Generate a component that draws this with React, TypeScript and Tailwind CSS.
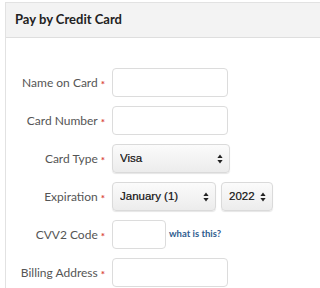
import React from 'react';

const LABEL = 'font-["Lato","Noto_Sans",sans-serif]';

function Arrows() {
  return (
    <svg width="6" height="10" viewBox="0 0 6 10" className="pointer-events-none absolute right-[7px] top-1/2 -translate-y-1/2">
      <path d="M3 0.5 L5.6 4 H0.4 Z" fill="#222" />
      <path d="M3 9.5 L5.6 6 H0.4 Z" fill="#222" />
    </svg>
  );
}

function Select({ value, width }: { value: string; width: string }) {
  return (
    <div className={`relative ${width} h-[29px]`}>
      <select
        defaultValue={value}
        className='h-full w-full appearance-none rounded-[4px] border border-[#dadada] bg-gradient-to-b from-[#fbfbfb] to-[#ececec] pl-[7px] font-["Liberation_Sans",Arial,sans-serif] text-[11.5px] text-[#111] shadow-[0_1px_1px_rgba(0,0,0,0.1)] outline-none [-webkit-text-stroke:0.2px_#111]'
      >
        <option>{value}</option>
      </select>
      <Arrows />
    </div>
  );
}

function TextInput({ width = 'w-[116px]' }: { width?: string }) {
  return (
    <input
      type="text"
      className={`${width} h-[29px] rounded-[4px] border border-[#dcdcdc] bg-white outline-none`}
    />
  );
}

function Row({ label, children }: { label: string; children: React.ReactNode }) {
  return (
    <div className="flex h-[29px] items-center">
      <div className={`${LABEL} flex w-[101px] shrink-0 items-center justify-end pr-[2px] text-[12px] text-[#555]`}>
        <span>{label}</span>
        <span className="ml-[3px] mt-[3px] text-[10px] font-bold leading-none text-[#d9433b]">*</span>
      </div>
      <div className="ml-[5px] flex items-center">{children}</div>
    </div>
  );
}

export default function App() {
  return (
    <div className="min-h-screen w-full overflow-hidden bg-white pl-[5px] pt-[2px]">
      <div className="min-h-[286px] w-full border-l border-t border-[#e2e2e2]">
        <div className={`${LABEL} flex h-[35px] items-center border-b border-[#dedede] bg-[#f3f3f3] pl-[9px] text-[13px] font-bold text-[#222]`}>
          Pay by Credit Card
        </div>

        <div className="flex flex-col gap-[9px] pt-[30px]">
          <Row label="Name on Card">
            <TextInput />
          </Row>
          <Row label="Card Number">
            <TextInput />
          </Row>
          <Row label="Card Type">
            <Select value="Visa" width="w-[118px]" />
          </Row>
          <Row label="Expiration">
            <div className="flex gap-[5px]">
              <Select value="January (1)" width="w-[104px]" />
              <Select value="2022" width="w-[52px]" />
            </div>
          </Row>
          <Row label="CVV2 Code">
            <TextInput width="w-[54px]" />
            <a href="#" className={`${LABEL} ml-[3px] text-[9.5px] font-bold text-[#2f5d8f]`}>
              what is this?
            </a>
          </Row>
          <Row label="Billing Address">
            <TextInput />
          </Row>
        </div>
      </div>
    </div>
  );
}
